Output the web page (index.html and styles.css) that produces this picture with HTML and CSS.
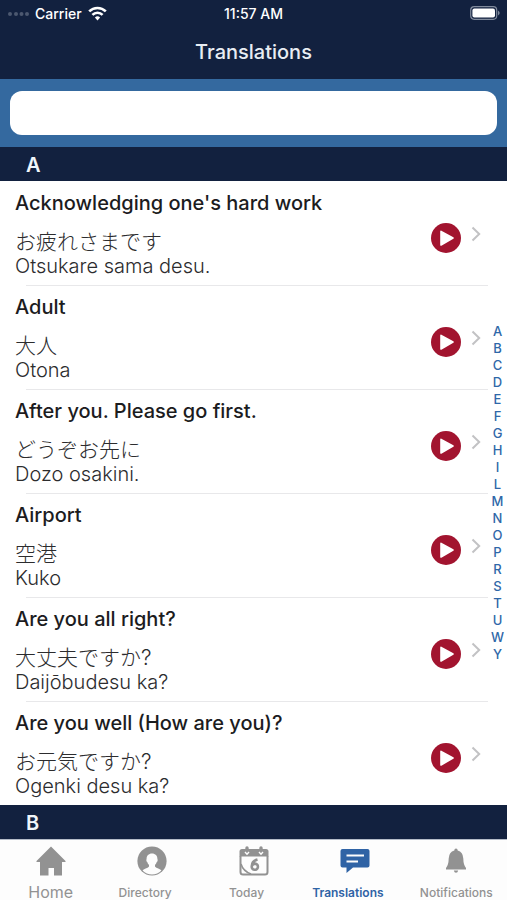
FILE: index.html
```html
<!DOCTYPE html>
<html lang="en">
<head>
    <meta charset="UTF-8">
    <meta name="viewport" content="width=device-width, initial-scale=1.0">
    <title>Translations</title>
    <link rel="stylesheet" href="styles.css">
</head>
<body>
    <svg class="symbols" aria-hidden="true">
        <symbol id="play" viewBox="0 0 30 30">
            <circle cx="15" cy="15" r="15" fill="#a2142f"/>
            <path d="M10 8.4 L22 15 L10 22 Z" fill="#fff" stroke="#fff" stroke-width="1.6" stroke-linejoin="round"/>
        </symbol>
        <symbol id="chevron" viewBox="0 0 10 16">
            <path d="M1.5 1.5 L8.2 8 L1.5 14.5" fill="none" stroke="#c2c2c4" stroke-width="2"/>
        </symbol>
    </svg>

    <header>
        <div class="status-bar">
            <div class="carrier">
                <svg width="22" height="6" viewBox="0 0 22 6" fill="#4c5870">
                    <circle cx="3" cy="4" r="2"/>
                    <circle cx="9" cy="4" r="2"/>
                    <circle cx="14.500" cy="4" r="2"/>
                    <circle cx="20" cy="4" r="2"/>
                </svg>
                <span>Carrier</span>
                <svg width="19" height="15" viewBox="0 0 19 15" fill="none" stroke="#fff" stroke-width="2.6">
                    <path d="M1.2 5.4 a11.7 11.7 0 0 1 16.6 0"/>
                    <path d="M4.4 8.8 a7.2 7.2 0 0 1 10.2 0"/>
                    <path d="M9.5 14.4 L6.9 11.6 a3.7 3.7 0 0 1 5.2 0 Z" fill="#fff" stroke="none"/>
                </svg>
            </div>
            <span>11:57 AM</span>
            <div class="battery">
                <svg width="30" height="14" viewBox="0 0 30 14">
                    <rect x="0.7" y="0.7" width="26" height="12.6" rx="3.5" fill="none" stroke="#808a9c" stroke-width="1.2"/>
                    <rect x="2.4" y="2.4" width="22.6" height="9.2" rx="2" fill="#fff"/>
                    <path d="M28 4.6 q3.4 2.4 0 4.8 Z" fill="#808a9c"/>
                </svg>
            </div>
        </div>
        <h1>Translations</h1>
    </header>

    <form class="search">
        <input type="search" aria-label="Search translations">
    </form>

    <main>
        <h2>A</h2>
        <ul class="phrases">
            <li>
                <div class="phrase">
                    <h3>Acknowledging one's hard work</h3>
                    <p lang="ja">お疲れさまです</p>
                    <p>Otsukare sama desu.</p>
                </div>
                <button type="button" class="play" aria-label="Play"><svg><use href="#play"/></svg></button>
                <a href="#" class="more" aria-label="Details"><svg><use href="#chevron"/></svg></a>
            </li>
            <li>
                <div class="phrase">
                    <h3>Adult</h3>
                    <p lang="ja">大人</p>
                    <p>Otona</p>
                </div>
                <button type="button" class="play" aria-label="Play"><svg><use href="#play"/></svg></button>
                <a href="#" class="more" aria-label="Details"><svg><use href="#chevron"/></svg></a>
            </li>
            <li>
                <div class="phrase">
                    <h3>After you. Please go first.</h3>
                    <p lang="ja">どうぞお先に</p>
                    <p>Dozo osakini.</p>
                </div>
                <button type="button" class="play" aria-label="Play"><svg><use href="#play"/></svg></button>
                <a href="#" class="more" aria-label="Details"><svg><use href="#chevron"/></svg></a>
            </li>
            <li>
                <div class="phrase">
                    <h3>Airport</h3>
                    <p lang="ja">空港</p>
                    <p>Kuko</p>
                </div>
                <button type="button" class="play" aria-label="Play"><svg><use href="#play"/></svg></button>
                <a href="#" class="more" aria-label="Details"><svg><use href="#chevron"/></svg></a>
            </li>
            <li>
                <div class="phrase">
                    <h3>Are you all right?</h3>
                    <p lang="ja">大丈夫ですか?</p>
                    <p>Daijōbudesu ka?</p>
                </div>
                <button type="button" class="play" aria-label="Play"><svg><use href="#play"/></svg></button>
                <a href="#" class="more" aria-label="Details"><svg><use href="#chevron"/></svg></a>
            </li>
            <li>
                <div class="phrase">
                    <h3>Are you well (How are you)?</h3>
                    <p lang="ja">お元気ですか?</p>
                    <p>Ogenki desu ka?</p>
                </div>
                <button type="button" class="play" aria-label="Play"><svg><use href="#play"/></svg></button>
                <a href="#" class="more" aria-label="Details"><svg><use href="#chevron"/></svg></a>
            </li>
        </ul>
        <h2>B</h2>

        <nav class="letters" aria-label="Index">
            <a href="#">A</a>
            <a href="#">B</a>
            <a href="#">C</a>
            <a href="#">D</a>
            <a href="#">E</a>
            <a href="#">F</a>
            <a href="#">G</a>
            <a href="#">H</a>
            <a href="#">I</a>
            <a href="#">L</a>
            <a href="#">M</a>
            <a href="#">N</a>
            <a href="#">O</a>
            <a href="#">P</a>
            <a href="#">R</a>
            <a href="#">S</a>
            <a href="#">T</a>
            <a href="#">U</a>
            <a href="#">W</a>
            <a href="#">Y</a>
        </nav>
    </main>

    <nav class="tabs">
        <a href="#" class="home">
            <svg viewBox="0 0 30 30" fill="currentColor">
                <path d="M15 0.5 L29.5 15 V16 H26 V29.5 H18 V22 H12.5 V29.5 H4 V16 H0.5 V15 Z"/>
            </svg>
            <span>Home</span>
        </a>
        <a href="#" class="inner">
            <svg viewBox="0 0 30 30">
                <circle cx="15" cy="15" r="14.6" fill="currentColor"/>
                <path d="M15 7.5 c3.6 0 5.6 2.6 5.4 5.6 c0.6 1.4 0 2.6 -0.7 2.9 c-0.4 1.4 -0.9 2.2 -1.7 2.9 v1.6 c0.8 1.7 4.6 1.8 6.4 4.1 a13 13 0 0 1 -18.8 0 c1.8 -2.3 5.6 -2.4 6.4 -4.1 v-1.6 c-0.8 -0.7 -1.3 -1.5 -1.7 -2.9 c-0.7 -0.3 -1.3 -1.5 -0.7 -2.9 c-0.2 -3 1.8 -5.6 5.4 -5.6 Z" fill="#fdfdfd"/>
            </svg>
            <span>Directory</span>
        </a>
        <a href="#" class="inner">
            <svg viewBox="0 0 30 30" fill="none" stroke="currentColor">
                <path d="M1.5 10 V26 Q1.5 28.5 4 28.5 H26 Q28.5 28.5 28.5 26 V10" stroke-width="2"/>
                <path d="M0.5 10.5 V5.5 Q0.5 3 3 3 H27 Q29.5 3 29.5 5.5 V10.5 Z" fill="currentColor" stroke="none"/>
                <path d="M8 2 V6 M22 2 V6" stroke-width="3.4" stroke-linecap="round"/>
                <path d="M6 6 L8 8.2 L10 6 M20 6 L22 8.2 L24 6" stroke="#fdfdfd" stroke-width="1.4"/>
                <path d="M2 18 Q4 25 12 28" stroke-width="1.6"/>
                <path d="M18.5 13.5 Q13 15 12.8 20 a3.1 3.1 0 1 0 3.2 -2.4 Q13.6 17.8 12.8 20" stroke-width="2.6"/>
            </svg>
            <span>Today</span>
        </a>
        <a href="#" class="inner active">
            <svg viewBox="0 0 30 30">
                <path d="M2.500 3 H27.500 Q29.500 3 29.500 5 V19.500 Q29.500 21.500 27.500 21.500 H13 L6.500 27 V21.500 H2.500 Q0.500 21.500 0.500 19.500 V5 Q0.500 3 2.500 3 Z" fill="currentColor"/>
                <path d="M6.500 9.500 H24 M6.500 15.500 H18" stroke="#fdfdfd" stroke-width="2"/>
            </svg>
            <span>Translations</span>
        </a>
        <a href="#">
            <svg viewBox="0 0 30 30" fill="currentColor">
                <path d="M15 2.500 q1.700 0 1.700 2 q5.300 1.300 5.600 8 q0.100 6.500 2.700 9.500 v1.500 h-20 v-1.500 q2.600 -3 2.700 -9.500 q0.300 -6.700 5.600 -8 q0 -2 1.700 -2 Z"/>
                <path d="M12.800 24.500 h4.400 q-0.500 2.300 -2.200 2.300 t-2.200 -2.300 Z"/>
            </svg>
            <span>Notifications</span>
        </a>
    </nav>
</body>
</html>
```
FILE: styles.css
```css
* {
    box-sizing: border-box;
    margin: 0;
    padding: 0;
}

body {
    font-family: Inter, "Noto Sans CJK JP", sans-serif;
    background-color: #fff;
    color: #1c1c1e;
    min-height: 100vh;
    display: flex;
    flex-direction: column;
}

a {
    text-decoration: none;
}

svg {
    display: block;
}

.symbols {
    position: absolute;
    width: 0;
    height: 0;
}

header {
    background-color: #12213f;
    color: #fff;
}

.status-bar {
    display: grid;
    grid-template-columns: 1fr auto 1fr;
    align-items: center;
    height: 26px;
    padding: 0 7px;
    font-size: 14px;
    font-weight: 500;
}

.carrier {
    display: flex;
    align-items: center;
    gap: 6px;
}

.battery {
    display: flex;
    justify-content: flex-end;
}

h1 {
    height: 53px;
    line-height: 53px;
    text-align: center;
    font-size: 20px;
    font-weight: 500;
    color: #e8edf3;
}

.search {
    background-color: #34699f;
    padding: 12px 10px;
}

.search input {
    display: block;
    width: 100%;
    height: 44px;
    padding: 0 12px;
    border: none;
    border-radius: 12px;
    background-color: #fff;
    font-size: 18px;
}

main {
    position: relative;
    flex: 1;
}

h2 {
    height: 34px;
    padding-left: 26px;
    background-color: #12213f;
    color: #f0f6fa;
    font-size: 20px;
    font-weight: 600;
    line-height: 37px;
}

.phrases {
    list-style: none;
}

.phrases li {
    position: relative;
    display: flex;
    align-items: center;
    height: 104px;
    padding: 9px 26px 0 15px;
}

/* inset separator between rows */
.phrases li + li::before {
    content: "";
    position: absolute;
    top: 0;
    left: 26px;
    right: 19px;
    border-top: 1px solid #e8e8ea;
}

.phrase {
    flex: 1;
    align-self: flex-start;
}

h3 {
    margin-bottom: 13px;
    font-size: 20px;
    font-weight: 500;
    line-height: 26px;
}

.phrase p {
    font-size: 20px;
    font-weight: 300;
    line-height: 25px;
    color: #2c2c2e;
}

.phrase p:lang(ja) {
    font-size: 21px;
}

.play {
    border: none;
    background: none;
    cursor: pointer;
}

.play svg {
    width: 30px;
    height: 30px;
}

.more {
    margin-left: 10px;
    padding-bottom: 8px;
}

.more svg {
    width: 10px;
    height: 16px;
}

.letters {
    position: absolute;
    top: 0;
    right: 0;
    bottom: 0;
    width: 19px;
    display: flex;
    flex-direction: column;
    justify-content: center;
}

.letters a {
    color: #2f67a8;
    font-size: 13px;
    font-weight: 500;
    line-height: 17px;
    text-align: center;
}

.tabs {
    display: flex;
    height: 61px;
    padding-top: 6px;
    background-color: #fdfdfd;
    border-top: 1px solid #b4bcc8;
}

.tabs a {
    flex: 1 0 0;
    display: flex;
    flex-direction: column;
    align-items: center;
    gap: 9px;
    color: #929292;
    font-size: 12px;
    font-weight: 500;
}

.tabs svg {
    flex-shrink: 0;
    width: 30px;
    height: 30px;
}

.tabs span {
    line-height: 15px;
}

.tabs .inner span {
    padding-right: 14px;
}

.tabs .home {
    font-size: 16px;
    font-weight: 400;
}

.tabs .active {
    color: #2f63a5;
    font-weight: 600;
}
```
